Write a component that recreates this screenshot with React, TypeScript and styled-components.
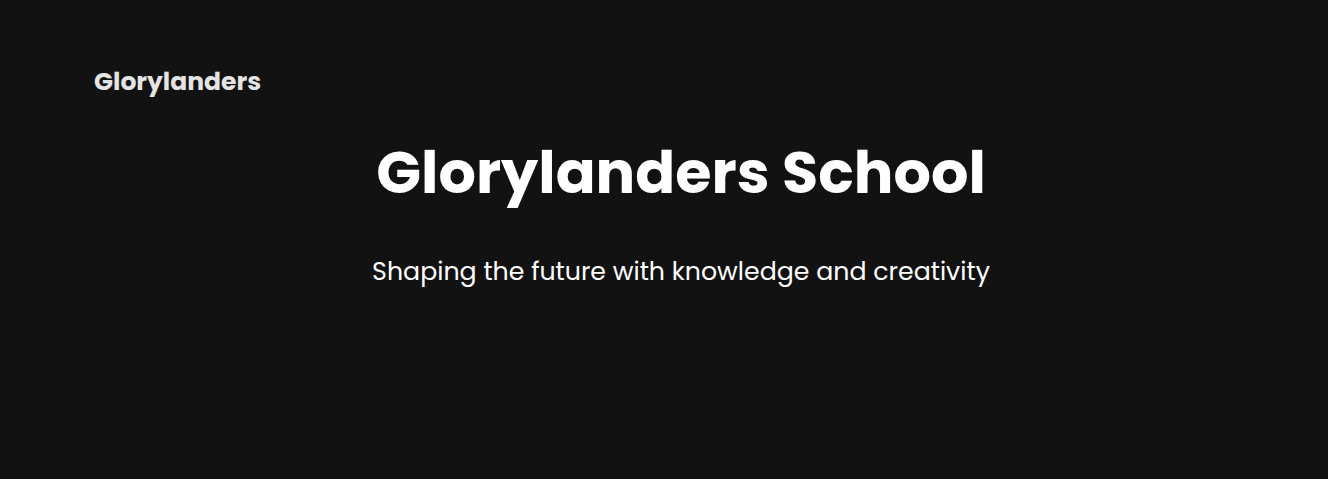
import React from "react";
import styled, { createGlobalStyle } from "styled-components";

const Global = createGlobalStyle`
  html, body { margin: 0; padding: 0; background: #121212; }
  body { font-family: Poppins, Inter, "Noto Sans", sans-serif; min-height: 479px; }
`;

const Page = styled.div`
  min-height: 479px;
  background: #121212;
  display: flex;
  flex-direction: column;
`;

const Header = styled.header`
  padding: 66px 94px 0;
  height: 32px;
  display: flex;
  align-items: center;
`;

const Logo = styled.div`
  font-family: Poppins, Inter, sans-serif;
  font-weight: 700;
  font-size: 25px;
  color: #e4e4e4;
`;

const Hero = styled.section`
  display: flex;
  flex-direction: column;
  align-items: center;
  padding: 35px 0 0 34px;
`;

const Title = styled.h1`
  margin: 0;
  font-family: Poppins, Inter, sans-serif;
  font-weight: 700;
  font-size: 58.85px;
  line-height: 80px;
  color: #ffffff;
`;

const Subtitle = styled.p`
  margin: 42px 0 0;
  font-family: Poppins, Inter, sans-serif;
  font-weight: 400;
  font-size: 25.25px;
  line-height: 32px;
  color: #ffffff;
`;

export default function App() {
  return (
    <Page>
      <Global />
      <Header>
        <Logo>Glorylanders</Logo>
      </Header>
      <Hero>
        <Title>Glorylanders School</Title>
        <Subtitle>Shaping the future with knowledge and creativity</Subtitle>
      </Hero>
    </Page>
  );
}
